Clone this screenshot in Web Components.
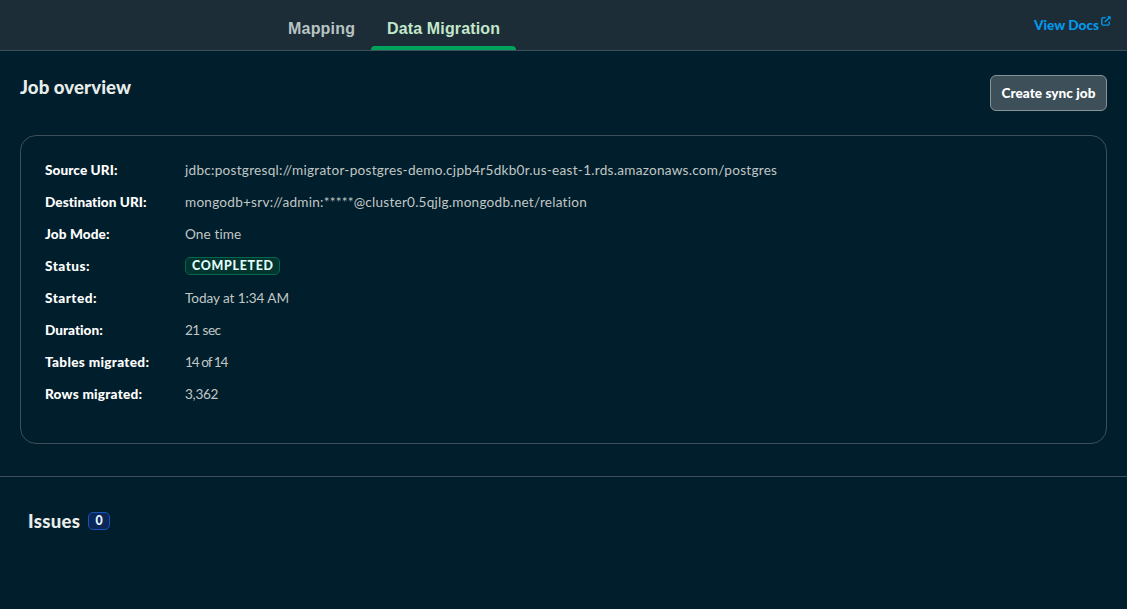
<!DOCTYPE html>
<html lang="en"><head><meta charset="utf-8"><title>Job overview</title>
<style>
html,body{margin:0;height:100%;background:#001e2b;overflow:hidden}
body{font-family:Lato,"Open Sans",sans-serif;font-size:13.6px;line-height:20px;color:#c1c7c6}
</style></head><body>
<migration-page></migration-page>
<script>
const define=(name,html,ready)=>customElements.define(name,class extends HTMLElement{
  connectedCallback(){
    if(this.shadowRoot)return;
    this.attachShadow({mode:'open'}).innerHTML=html;
    if(ready)ready(this);
  }
});
// Text run tracked so that it spans the width given in its "w" attribute.
define('fit-text','<style>:host{display:inline-block;white-space:pre}</style><slot></slot>',el=>{
  const n=el.textContent.length,w=+el.getAttribute('w');
  if(n<2)return;
  const natural=el.getBoundingClientRect().width;
  const s=(w-natural)/(n-1);
  el.style.letterSpacing=s+'px';
  el.style.marginRight=-s+'px';
});
define('nav-tab',`<style>
:host{display:flex;box-sizing:border-box;height:50px;padding:19px 16px 0;font:bold 16px/20px "Liberation Sans",Arial,sans-serif;color:#b8c4c2;position:relative}
:host([active]){color:#c3e7ca}
:host([active])::after{content:"";position:absolute;left:0;right:0;bottom:0;height:4px;border-radius:4px 4px 0 0;background:#00a35c}
</style><slot></slot>`);
define('docs-link',`<style>
:host{display:flex;align-items:flex-start;color:#0498ec;font-weight:900;gap:2px}
svg{display:block;width:10px;height:10px;margin-top:1px}
</style><span><slot></slot></span><svg viewBox="0 0 10 10" fill="none" stroke="currentColor" stroke-width="1.4"><path d="M4.7 1.6H2.1Q.8 1.6.8 2.9V7.8Q.8 9.1 2.1 9.1H6.9Q8.2 9.1 8.2 7.8V5.4M3.8 6.1 8.2 1.7"/><path d="M6 .3H9.3Q9.7.3 9.7.7V4Z" fill="currentColor" stroke="none"/></svg>`);
define('top-bar',`<style>
:host{display:flex;box-sizing:border-box;height:51px;background:#1c2d38;border-bottom:1px solid #3d4f58;padding:0 16px 0 272px;justify-content:space-between}
nav{display:flex}docs-link{margin-top:15px}
</style><nav><nav-tab><fit-text w="67">Mapping</fit-text></nav-tab><nav-tab active><fit-text w="113">Data Migration</fit-text></nav-tab></nav><docs-link><fit-text w="65">View Docs</fit-text></docs-link>`);
define('action-button',`<style>
:host{display:block}
button{display:block;box-sizing:border-box;width:117px;height:36px;padding:0;border:1px solid #889397;border-radius:6px;background:#3d4f58;color:#fff;font:900 13.6px/20px Lato,sans-serif}
</style><button><slot></slot></button>`);
define('status-badge',`<style>
:host{display:flex;box-sizing:border-box;height:18px;padding:0 6px;border:1px solid #00684a;border-radius:5px;background:#023430;color:#e3fcf7;font-size:12.4px;font-weight:900;line-height:16px}
:host([kind=count]){width:22px;padding:0;justify-content:center;border-color:#1254b7;background:#0c2657;color:#e1f7ff}
</style><slot></slot>`);
define('detail-row',`<style>
:host{display:grid;grid-template-columns:140px 1fr;height:32px;line-height:20px}
.k{color:#fff;font-weight:900}.v{display:flex;align-items:flex-start}
::slotted(status-badge){margin-top:1px}
</style><span class="k"><slot name="label"></slot></span><span class="v"><slot></slot></span>`);
const row=(label,lw,value,vw)=>`<detail-row><fit-text slot="label" w="${lw}">${label}</fit-text>${value==='COMPLETED'?`<status-badge><fit-text w="${vw}">${value}</fit-text></status-badge>`:`<fit-text w="${vw}">${value}</fit-text>`}</detail-row>`;
define('overview-card',`<style>
:host{display:block;box-sizing:border-box;height:309px;border:1px solid #3d4f58;border-radius:16px;padding:24px}
</style>`+[
['Source URI:',72.5,'jdbc:postgresql://migrator-postgres-demo.cjpb4r5dkb0r.us-east-1.rds.amazonaws.com/postgres',592],
['Destination URI:',102,'mongodb+srv://admin:*****@cluster0.5qjlg.mongodb.net/relation',402],
['Job Mode:',64.5,'One time',56.5],['Status:',44.5,'COMPLETED',81],['Started:',51.5,'Today at 1:34 AM',104],
['Duration:',58,'21 sec',36],['Tables migrated:',104,'14 of 14',43.5],['Rows migrated:',97,'3,362',33.5]].map(r=>row(...r)).join(''));
define('migration-page',`<style>
:host{display:block}
header{display:flex;justify-content:space-between;align-items:flex-start;padding:24px 20px}
h2{margin:0;font-size:18.6px;line-height:24px;font-weight:900;color:#e8edeb}
main{height:426px;box-sizing:border-box;border-bottom:1px solid #3d4f58;margin-bottom:32px}
overview-card{margin:0 20px}
section{display:flex;align-items:flex-start;padding:0 28px;gap:8px}
section status-badge{margin-top:3px}
</style><top-bar></top-bar><main><header><h2><fit-text w="111">Job overview</fit-text></h2><action-button><fit-text w="94">Create sync job</fit-text></action-button></header><overview-card></overview-card></main>
<section><h2><fit-text w="52">Issues</fit-text></h2><status-badge kind="count"><fit-text>0</fit-text></status-badge></section>`);
</script></body></html>
